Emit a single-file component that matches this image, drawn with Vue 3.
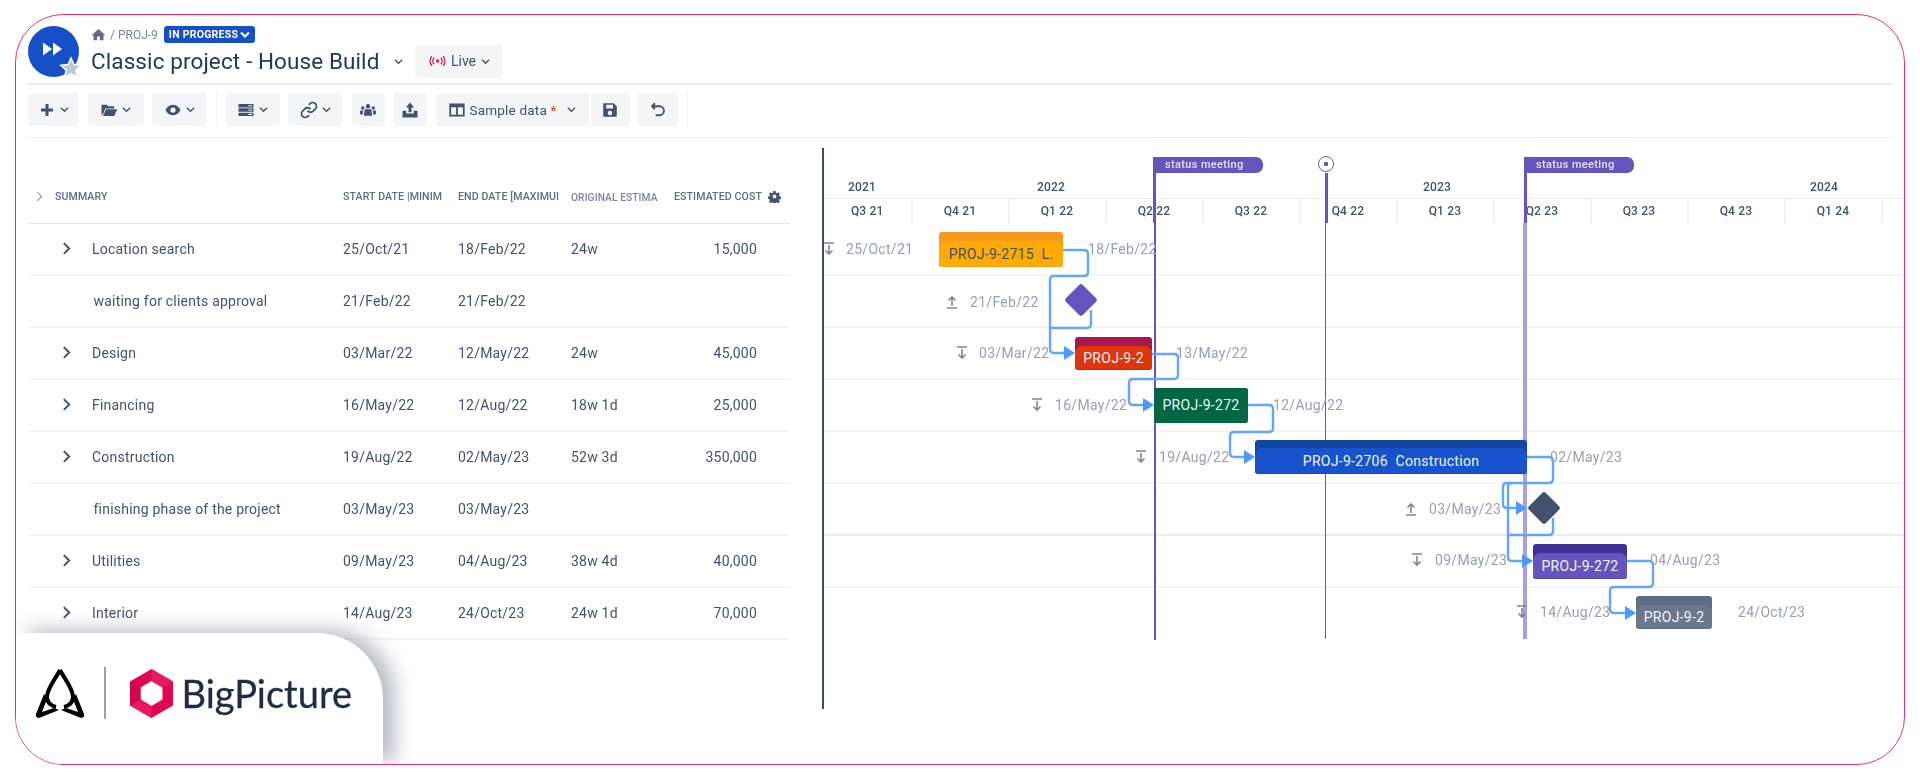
<template>
  <div class="frame">
    <header class="head soft">
      <div class="avatar">
        <svg class="ff" viewBox="0 0 21 16"><path d="M1 1.5v13L10 8zM11 1.5v13L20 8z" /></svg>
        <svg class="star" viewBox="0 0 24 24"><path d="M12 2l3 6.6 7.2.8-5.4 4.8 1.5 7.1L12 17.7l-6.3 3.6 1.5-7.1L1.800 9.400 9 8.600z" /></svg>
      </div>
      <div class="head-text">
        <div class="crumbs">
          <svg class="home" viewBox="0 0 24 20"><path d="M12 1L1 11h3v8h6v-6h4v6h6v-8h3z" /></svg>
          <span>/ PROJ-9</span>
          <span class="badge">IN PROGRESS
            <svg class="chev" viewBox="0 0 10 7"><path d="M1 1.500l4 4 4-4" /></svg>
          </span>
        </div>
        <div class="title-row">
          <h1>Classic project - House Build</h1>
          <svg class="chev title-chev" viewBox="0 0 10 7"><path d="M1 1.500l4 4 4-4" /></svg>
          <button class="live">
            <svg class="live-ic" viewBox="0 0 18 12">
              <circle cx="9" cy="6" r="1.800" />
              <path d="M5.500 2.500a5 5 0 0 0 0 7M12.500 2.500a5 5 0 0 1 0 7M3 1a8 8 0 0 0 0 10M15 1a8 8 0 0 1 0 10" />
            </svg>
            Live
            <svg class="chev" viewBox="0 0 10 7"><path d="M1 1.500l4 4 4-4" /></svg>
          </button>
        </div>
      </div>
    </header>

    <div class="toolbar soft">
      <template v-for="t in tools" :key="t.id">
        <i v-if="t.sep" class="sep"></i>
        <button v-else class="tool" :class="t.id">
          <svg class="ic" :class="{ line: t.line }" viewBox="0 0 24 24"><path :d="t.d" fill-rule="evenodd" /></svg>
          <span v-if="t.id === 'sample'" class="sample-label">Sample data <em>*</em></span>
          <svg v-if="t.chev" class="chev" viewBox="0 0 10 7"><path d="M1 1.500l4 4 4-4" /></svg>
        </button>
      </template>
    </div>

    <main class="main soft">
      <section class="table">
        <div class="row row-head">
          <div class="summary-head">
            <svg class="expand" viewBox="0 0 8 12"><path d="M1.500 1l5 5-5 5" /></svg>
            SUMMARY
          </div>
          <div>START DATE |MINIM</div>
          <div>END DATE [MAXIMUI</div>
          <div class="dim">ORIGINAL ESTIMA</div>
          <div class="cost-head">
            ESTIMATED COST
            <svg class="gear" viewBox="0 0 24 24">
              <path fill-rule="evenodd" d="M10 2h4l.6 3 2.100.9 2.600-1.700 2.800 2.800-1.700 2.600.9 2.100 3 .6v4l-3 .6-.9 2.100 1.700 2.600-2.800 2.800-2.600-1.700-2.100.9-.6 3h-4l-.6-3-2.100-.9-2.600 1.700-2.800-2.800 1.700-2.600-.9-2.100-3-.6v-4l3-.6.9-2.100L1.900 7 4.700 4.200l2.600 1.700L9.400 5zM12 8.500a3.500 3.500 0 1 0 0 7 3.500 3.500 0 0 0 0-7z" />
            </svg>
          </div>
        </div>
        <div v-for="r in rows" :key="r.name" class="row">
          <div class="summary">
            <svg v-if="!r.milestone" class="expand dark" viewBox="0 0 8 12"><path d="M1.500 1l5 5-5 5" /></svg>
            <span :class="{ ms: r.milestone }">{{ r.name }}</span>
          </div>
          <div>{{ r.start }}</div>
          <div>{{ r.end }}</div>
          <div>{{ r.est }}</div>
          <div class="cost">{{ r.cost }}</div>
        </div>
      </section>

      <section class="gantt">
        <div class="years">
          <span v-for="y in years" :key="y.t" class="year" :style="at(y.x, 187)">{{ y.t }}</span>
        </div>
        <div class="quarters">
          <div v-for="q in quarters" :key="q" class="quarter">{{ q }}</div>
          <div class="quarter tail"></div>
        </div>
        <div class="lanes">
          <div v-for="n in 8" :key="n" class="lane" :class="{ strong: n === 6 }"></div>
        </div>

        <i class="vline thin" :style="at(1154, 223)"></i>
        <i class="vline top" :style="at(1153, 157)"></i>
        <div class="flag" :style="at(1153, 157)">status meeting</div>
        <i class="vline today" :style="at(1325, 223)"></i>
        <i class="vline today-top" :style="at(1325, 173)"></i>
        <i class="today-dot" :style="at(1326, 165)"></i>
        <i class="vline pale" :style="at(1523, 223)"></i>
        <i class="vline top" :style="at(1524, 157)"></i>
        <div class="flag" :style="at(1524, 157)">status meeting</div>

        <svg class="links" viewBox="822 148 1083 561">
          <path v-for="(d, i) in links" :key="i" :d="d" />
          <polygon v-for="a in arrows" :key="a[0]" :points="arrow(a)" />
        </svg>

        <template v-for="d in dates" :key="d.t + d.x">
          <span class="date" :style="at(d.x, d.y)">{{ d.t }}</span>
          <svg v-if="d.icon" class="pin" viewBox="0 0 12 14" :style="at(d.icon, d.y)">
            <path v-if="d.up" d="M1 13h10M6 11V2M2.500 5.500L6 2l3.500 3.500" />
            <path v-else d="M1 1h10M6 3v9M2.500 8.500L6 12l3.500-3.500" />
          </svg>
        </template>

        <div
          v-for="b in bars"
          :key="b.text + b.x"
          class="bar"
          :class="b.cls"
          :style="{ ...at(b.x, b.y), width: b.w + 'px', height: b.h + 'px' }"
        >
          <div class="bar-body">{{ b.text }}</div>
        </div>

        <i class="diamond violet" :style="at(1081, 300)"></i>
        <i class="diamond slate" :style="at(1544, 508)"></i>
      </section>
    </main>

    <aside class="brand">
      <svg class="afire" viewBox="0 0 50 52">
        <path class="loop" d="M25 3C21 11 13 20 12 29c-.6 6 4 10 9 11M25 3c4 8 12 17 13 26 .6 6-4 10-9 11" />
        <path d="M9 27L1 47q-1 3.500 3 4l20-8-5-2-12 4 5-13zM41 27l8 20q1 3.500-3 4l-20-8 5-2 12 4-5-13z" />
      </svg>
      <i class="brand-sep"></i>
      <svg class="hex" viewBox="0 0 45 51">
        <path fill-rule="evenodd" fill="#e0064f" d="M22.500 1L44 13.500v24L22.500 50 1 37.500v-24zM22.500 13L11.500 19.500v12L22.500 38l11-6.500v-12z" />
        <path fill="#e91a5b" d="M22.500 1L44 13.500 33.500 19.500 22.500 13zM1 37.500L11.500 31.500 22.500 38v12z" />
        <path fill="#d40450" d="M1 13.500L11.500 19.500v12L1 37.500z" />
      </svg>
      <span class="wordmark">BigPicture</span>
    </aside>
  </div>
</template>

<script setup>
const tools = [
  { id: 'add', chev: true, d: 'M10 4h4v6h6v4h-6v6h-4v-6H4v-4h6z' },
  { id: 'folder', chev: true, d: 'M2 5h7l2 2h8v3H7l-3 8H2zM8 11h15l-4 9H4z' },
  { id: 'eye', chev: true, d: 'M12 5c5.500 0 9 4.500 10 7-1 2.500-4.500 7-10 7S3 14.500 2 12c1-2.500 4.500-7 10-7zM12 8.500a3.500 3.500 0 1 0 0 7 3.500 3.500 0 0 0 0-7z' },
  { id: 'sep1', sep: true },
  { id: 'view', chev: true, d: 'M2 4h20v4.500H2zM2 9.800h20v4.500H2zM2 15.500h20V20H2zM15 5.500v1.500h5V5.500zM15 11.300v1.500h5v-1.500zM15 17v1.500h5V17z' },
  { id: 'link', chev: true, line: true, d: 'M10 13a5 5 0 0 0 7.540.54l3-3a5 5 0 0 0-7.070-7.070l-1.720 1.710M14 11a5 5 0 0 0-7.540-.54l-3 3a5 5 0 0 0 7.070 7.070l1.710-1.710' },
  { id: 'people', d: 'M12 4a3 3 0 1 1 0 6 3 3 0 0 1 0-6zM5 7a2.300 2.300 0 1 1 0 4.600A2.300 2.300 0 0 1 5 7zM19 7a2.300 2.300 0 1 1 0 4.600A2.300 2.300 0 0 1 19 7zM7.500 11h9l1 8.500h-11zM1.500 12.500h4L5 18H1.500zM18.500 12.500h4V18H19z' },
  { id: 'upload', d: 'M12 2l5.500 6.500H14V15h-4V8.500H6.500zM2 13h5v3.500h10V13h5v9H2z' },
  { id: 'sample', chev: true, line: true, d: 'M3 4.500h18v15H3zM12 4.500v15M3 7h18' },
  { id: 'save', d: 'M3 3h14l4 4v14H3zM7 5v5h9V5zM12 13a3 3 0 1 0 0 6 3 3 0 0 0 0-6z' },
  { id: 'undo', line: true, d: 'M8 3L4 7l4 4M4 7h10a6 6 0 0 1 0 12H9' },
  { id: 'sep2', sep: true },
]

const rows = [
  { name: 'Location search', start: '25/Oct/21', end: '18/Feb/22', est: '24w', cost: '15,000' },
  { name: 'waiting for clients approval', start: '21/Feb/22', end: '21/Feb/22', milestone: true },
  { name: 'Design', start: '03/Mar/22', end: '12/May/22', est: '24w', cost: '45,000' },
  { name: 'Financing', start: '16/May/22', end: '12/Aug/22', est: '18w 1d', cost: '25,000' },
  { name: 'Construction', start: '19/Aug/22', end: '02/May/23', est: '52w 3d', cost: '350,000' },
  { name: 'finishing phase of the project', start: '03/May/23', end: '03/May/23', milestone: true },
  { name: 'Utilities', start: '09/May/23', end: '04/Aug/23', est: '38w 4d', cost: '40,000' },
  { name: 'Interior', start: '14/Aug/23', end: '24/Oct/23', est: '24w 1d', cost: '70,000' },
]

const years = [
  { t: '2021', x: 848 },
  { t: '2022', x: 1037 },
  { t: '2023', x: 1423 },
  { t: '2024', x: 1810 },
]
const quarters = ['Q3 21', 'Q4 21', 'Q1 22', 'Q2 22', 'Q3 22', 'Q4 22', 'Q1 23', 'Q2 23', 'Q3 23', 'Q4 23', 'Q1 24']

const dates = [
  { t: '25/Oct/21', x: 846, y: 249, icon: 823 },
  { t: '18/Feb/22', x: 1088, y: 249 },
  { t: '21/Feb/22', x: 970, y: 302, icon: 946, up: true },
  { t: '03/Mar/22', x: 979, y: 353, icon: 956 },
  { t: '13/May/22', x: 1176, y: 353 },
  { t: '16/May/22', x: 1055, y: 405, icon: 1031 },
  { t: '12/Aug/22', x: 1273, y: 405 },
  { t: '19/Aug/22', x: 1159, y: 457, icon: 1135 },
  { t: '02/May/23', x: 1550, y: 457 },
  { t: '03/May/23', x: 1429, y: 509, icon: 1405, up: true },
  { t: '09/May/23', x: 1435, y: 560, icon: 1411 },
  { t: '04/Aug/23', x: 1650, y: 560 },
  { t: '14/Aug/23', x: 1540, y: 612, icon: 1516 },
  { t: '24/Oct/23', x: 1738, y: 612 },
]

const bars = [
  { text: 'PROJ-9-2715  L.', x: 939, y: 232, w: 124, h: 35, cls: 'orange' },
  { text: 'PROJ-9-2', x: 1075, y: 337, w: 77, h: 33, cls: 'red' },
  { text: 'PROJ-9-272', x: 1154, y: 388, w: 94, h: 35, cls: 'green' },
  { text: 'PROJ-9-2706  Construction', x: 1255, y: 440, w: 272, h: 34, cls: 'blue' },
  { text: 'PROJ-9-272', x: 1533, y: 544, w: 94, h: 35, cls: 'purple' },
  { text: 'PROJ-9-2', x: 1636, y: 596, w: 76, h: 33, cls: 'grey' },
]

const links = [
  'M1063 250H1084Q1088 250 1088 254V272Q1088 276 1084 276H1054Q1050 276 1050 280V349Q1050 353 1054 353H1066',
  'M1091 310V324Q1091 328 1087 328H1050',
  'M1152 354H1174Q1178 354 1178 358V375Q1178 379 1174 379H1133Q1129 379 1129 383V401Q1129 405 1133 405H1145',
  'M1248 405H1269Q1273 405 1273 409V428Q1273 432 1269 432H1234Q1230 432 1230 436V453Q1230 457 1234 457H1246',
  'M1527 457H1549Q1553 457 1553 461V479Q1553 483 1549 483H1507Q1503 483 1503 487V504Q1503 508 1507 508H1517',
  'M1512 483Q1508 483 1508 487V557Q1508 561 1512 561H1524',
  'M1553 518V531Q1553 535 1549 535H1508',
  'M1627 561H1649Q1653 561 1653 565V583Q1653 587 1649 587H1614Q1610 587 1610 591V609Q1610 613 1614 613H1627',
]
// tip x, y of the small arrow heads in front of each bar
const arrows = [[1075, 353], [1154, 405], [1255, 457], [1527, 508], [1533, 561], [1636, 613]]

function arrow([x, y]) {
  return `${x - 11},${y - 7} ${x},${y} ${x - 11},${y + 7}`
}

// the chart is a free canvas, its items are kept in page coordinates
function at(x, y) {
  return { left: x - 824 + 'px', top: y - 148 + 'px' }
}
</script>

<style scoped>
.frame {
  position: relative;
  box-sizing: border-box;
  width: 1890px;
  height: 751px;
  margin: 14px 15px 0;
  padding-left: 12px;
  border: 1.5px solid #ec2f72;
  border-radius: 48px;
  overflow: hidden;
  background: #fff;
  font-family: Roboto, sans-serif;
  color: #42526e;
}
.soft { filter: blur(.35px); }

.head { display: flex; gap: 12px; height: 70px; padding-top: 11px; margin-right: 12px; box-sizing: border-box; border-bottom: 2px solid #ebecf0; }
.avatar { position: relative; width: 51px; height: 51px; border-radius: 50%; background: #1650c8; flex: none; }
.ff { position: absolute; left: 14px; top: 15px; width: 21px; height: 16px; fill: #fff; }
.star { position: absolute; right: -4px; bottom: -3px; width: 24px; height: 24px; fill: #c1c7d0; stroke: #fff; stroke-width: 1.500; }
.head-text { display: flex; flex-direction: column; }
.crumbs { display: flex; align-items: center; gap: 4px; height: 17px; font-size: 12px; color: #7a869a; }
.home { width: 15px; height: 13px; fill: #5e6c84; }
.badge { display: flex; align-items: center; gap: 2px; height: 17px; margin-left: 2px; padding: 0 5px 0 5px; border-radius: 3px; background: #1650c8; color: #fff; font-size: 10.500px; font-weight: 700; letter-spacing: .25px; }
.badge .chev { stroke: #fff; width: 10px; stroke-width: 2; }
.title-row { display: flex; align-items: center; height: 35px; }
h1 { margin: 0; font-size: 22.500px; font-weight: 400; color: #253858; letter-spacing: .1px; white-space: nowrap; }
.chev { width: 9px; height: 7px; fill: none; stroke: #42526e; stroke-width: 1.500; flex: none; }
.title-chev { margin: 2px 12px 0 15px; }
.live { display: flex; align-items: center; justify-content: center; gap: 5px; width: 88px; height: 33px; margin-top: 1px; border: 0; border-radius: 4px; background: #f4f5f7; font: 14px Roboto, sans-serif; color: #42526e; }
.live-ic { width: 17px; height: 12px; fill: #de1a4f; }
.live-ic path { fill: none; stroke: #de1a4f; stroke-width: 1.500; }

.toolbar { display: flex; align-items: center; gap: 8.500px; height: 53px; margin-right: 12px; box-sizing: border-box; padding-top: 8px; padding-bottom: 10.500px; border-bottom: 1.500px solid #ebecf0; }
.tool { display: flex; align-items: center; justify-content: center; gap: 4px; height: 33px; padding: 0; border: 0; border-radius: 4px; background: #f4f5f7; font: 13.500px Roboto, sans-serif; color: #42526e; flex: none; }
.sep { width: 1.500px; height: 33px; background: #f0f1f3; flex: none; }
.ic { width: 18px; height: 18px; fill: #42526e; flex: none; }
.ic.line { fill: none; stroke: #42526e; stroke-width: 2.400; }
.add { width: 51px; }
.folder { width: 56px; }
.eye { width: 55px; }
.view { width: 54px; }
.link { width: 54px; }
.people { width: 33px; margin-left: 1px; }
.upload { width: 34px; }
.sample { width: 153px; gap: 3px; border-radius: 4px 0 0 4px; }
.save { width: 39px; margin-left: -6.500px; border-radius: 0 4px 4px 0; }
.undo { width: 40px; }
.sample-label { margin-right: 7px; white-space: nowrap; letter-spacing: .2px; }
.sample-label em { color: #de350b; font-style: normal; }

.main { display: flex; gap: 32px; }
.table { width: 762px; flex: none; }
.row { display: grid; grid-template-columns: 315px 115px 113px 97px 122px; align-items: center; height: 52px; box-sizing: border-box; border-bottom: 2px solid #f4f5f7; font-size: 14px; letter-spacing: .22px; white-space: nowrap; }
.row-head { height: 85.500px; align-items: end; padding-bottom: 20px; border-bottom: 1.500px solid #dfe1e6; font-size: 10.600px; font-weight: 500; letter-spacing: .1px; color: #5e6c84; }
.row-head > div { overflow: hidden; }
.row-head .dim { color: #7a869a; font-size: 10.200px; }
.summary-head { display: flex; align-items: center; gap: 12px; padding-left: 8px; }
.expand { width: 7px; height: 11px; fill: none; stroke: #97a0af; stroke-width: 1.500; flex: none; }
.expand.dark { width: 9px; height: 13px; stroke: #42526e; stroke-width: 1.800; }
.summary { display: flex; align-items: center; gap: 21px; padding-left: 34px; }
.ms { margin-left: 31.500px; }
.cost { padding-right: 33px; text-align: right; }
.cost-head { display: flex; align-items: center; justify-content: flex-end; gap: 6px; padding-right: 9px; }
.gear { width: 13px; height: 13px; fill: #42526e; flex: none; }

.gantt { position: relative; flex: 1; height: 561px; margin-top: 9.500px; border-left: 2px solid #3d4b6b; }
.years { height: 51px; box-sizing: border-box; border-bottom: 1.500px solid #ebecf0; }
.year { position: absolute; font-size: 12px; font-weight: 500; color: #42526e; transform: translateY(-50%); letter-spacing: .2px; }
.quarters { display: flex; height: 24px; }
.quarter { flex: none; width: 97px; box-sizing: border-box; padding-top: 5px; border-right: 2px solid #f0f1f3; font-size: 12px; font-weight: 500; color: #42526e; text-align: center; letter-spacing: .2px; }
.quarter:first-child { width: 88.500px; padding-left: 0; }
.quarter.tail { width: 20px; border: 0; }
.lanes { margin-top: 1px; }
.lane { height: 52px; box-sizing: border-box; border-bottom: 2px solid #f4f5f7; }
.lane.strong { border-bottom-color: #ebecf0; }
.lane:last-child { border-bottom: 0; }

.vline { position: absolute; bottom: 69px; width: 1.500px; background: #6554c0; }
.vline.top { width: 3px; height: 66px; bottom: auto; }
.vline.today { width: 1px; bottom: 70px; }
.vline.today-top { width: 2.500px; height: 50px; bottom: auto; }
.vline.pale { width: 4px; bottom: 70px; background: #a99fe0; }
.today-dot { position: absolute; width: 14px; height: 14px; margin: -8.500px 0 0 -8.500px; border: 1.500px solid #6554c0; border-radius: 50%; background: radial-gradient(circle, #6554c0 2px, #fff 2.500px); }
.flag { position: absolute; width: 110px; height: 16px; padding-left: 12px; box-sizing: border-box; border-radius: 0 7px 7px 0; background: #6554c0; color: #e4e1f6; font-size: 11px; font-weight: 500; line-height: 16px; letter-spacing: .35px; white-space: nowrap; }

.links { position: absolute; left: 0; top: 0; width: 1083px; height: 561px; margin-left: -2px; fill: none; }
.links path { stroke: #62a5ff; stroke-width: 2.400; }
.links polygon { fill: #4c9aff; }

.date { position: absolute; font-size: 14px; letter-spacing: .3px; color: #97a0af; transform: translateY(-50%); white-space: nowrap; }
.pin { position: absolute; width: 12px; height: 14px; fill: none; stroke: #7a869a; stroke-width: 1.600; transform: translateY(-50%); }

.bar { position: absolute; border-radius: 3px; overflow: hidden; }
.bar-body { position: absolute; left: 0; right: 0; top: 9px; bottom: 0; display: flex; align-items: center; justify-content: center; font-size: 14px; letter-spacing: .3px; white-space: pre; clip-path: polygon(5px 0, calc(100% - 5px) 0, 100% 5px, 100% 100%, 0 100%, 0 5px); color: #f2f4f8; }
.orange { background: #f8991d; }
.orange .bar-body { background: #ffab00; color: #42526e; }
.red { background: #a8174f; }
.red .bar-body { background: #de350b; }
.green { background: #006644; }
.green .bar-body { background: #006644; top: 0; clip-path: none; }
.blue { background: #0f47a1; }
.blue .bar-body { background: #1653cc; top: 8px; }
.purple { background: #403294; }
.purple .bar-body { background: #6554c0; }
.grey { background: #5e6c84; }
.grey .bar-body { background: #6b778c; }

.diamond { position: absolute; width: 24px; height: 24px; margin: -12px 0 0 -12px; border-radius: 3px; transform: rotate(45deg); }
.violet { background: #6554c0; }
.slate { background: #42526e; }

.brand { position: absolute; left: 0; bottom: 0; display: flex; align-items: center; width: 367px; height: 131px; padding: 0 0 11px 19px; box-sizing: border-box; border-radius: 0 66px 0 0; background: #fff; box-shadow: 12px -3px 20px rgba(75, 85, 105, .4); }
.afire { width: 50px; height: 52px; fill: #000; flex: none; }
.afire .loop { fill: none; stroke: #000; stroke-width: 4; }
.brand-sep { width: 1.500px; height: 52px; margin: 0 23px 0 19px; background: #98a2b3; flex: none; }
.hex { width: 45px; height: 51px; flex: none; }
.wordmark { margin-left: 8px; font-family: Lato, sans-serif; font-size: 38px; color: #1e2d45; -webkit-text-stroke: .3px #1e2d45; }
</style>

<style>
body { background: #fff; }
</style>
